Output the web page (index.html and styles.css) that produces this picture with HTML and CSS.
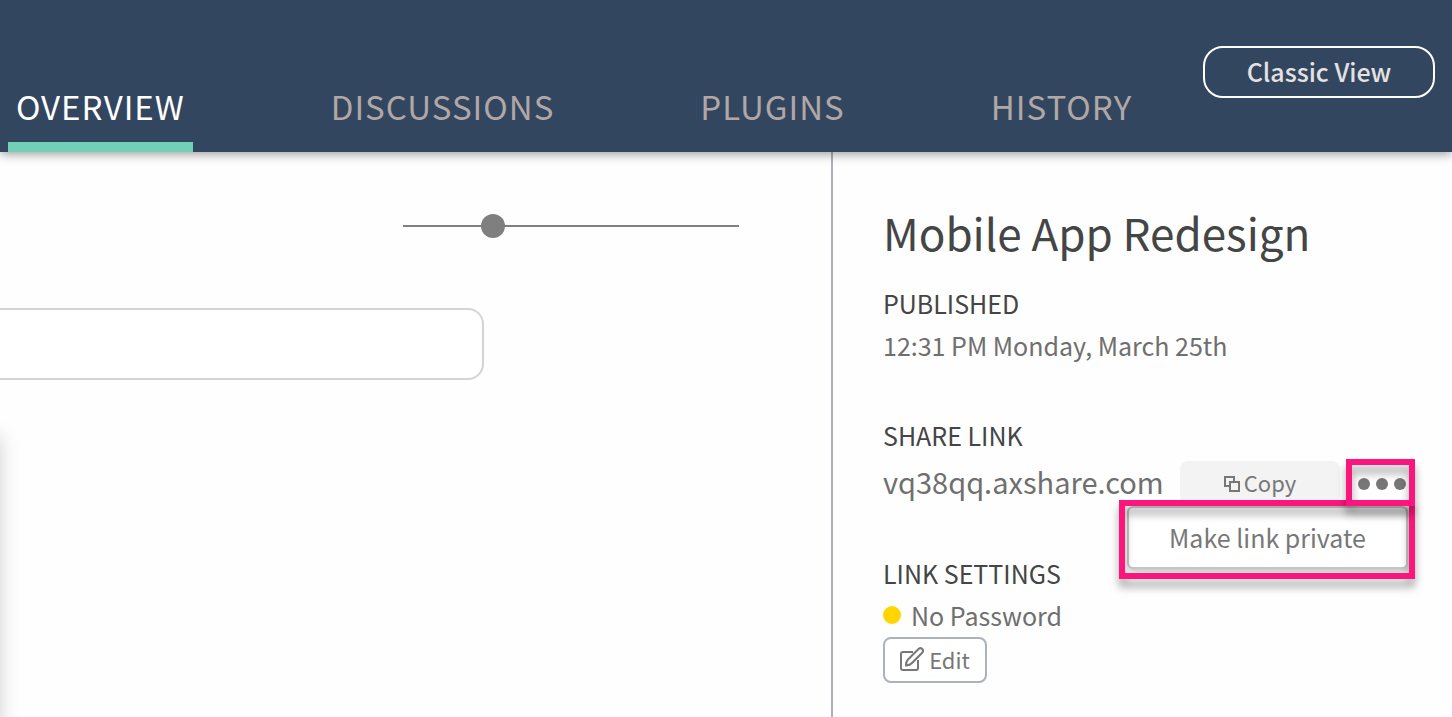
FILE: index.html
```html
<!DOCTYPE html>
<html lang="en">
<head>
<meta charset="utf-8">
<title>Mobile App Redesign</title>
<link rel="stylesheet" href="styles.css">
</head>
<body>
<header class="topbar">
  <nav class="tabs">
    <a class="tab tab-active" href="#overview">OVERVIEW</a>
    <a class="tab" href="#discussions">DISCUSSIONS</a>
    <a class="tab" href="#plugins">PLUGINS</a>
    <a class="tab" href="#history">HISTORY</a>
  </nav>
  <button class="classic" type="button">Classic View</button>
</header>
<div class="content">
  <main class="workspace">
    <input class="zoom" type="range" min="0" max="100" value="25" aria-label="Thumbnail size">
    <input class="field" type="text" aria-label="Search">
    <div class="card"></div>
  </main>
  <aside class="details">
    <h1 class="title">Mobile App Redesign</h1>
    <section class="section">
      <h2 class="label">PUBLISHED</h2>
      <p class="value">12:31 PM Monday, March 25th</p>
    </section>
    <section class="section">
      <h2 class="label">SHARE LINK</h2>
      <div class="share">
        <a class="url" href="#share">vq38qq.axshare.com</a>
        <button class="copy" type="button">
          <svg class="copy-icon" viewBox="0 0 16 16" aria-hidden="true"><path d="M5 10H1V1h9v4M6 6h9v9H6z"/></svg>
          Copy
        </button>
        <div class="more-wrap">
          <button class="more" type="button" aria-label="More options">
            <svg class="dots" viewBox="0 0 48 12" aria-hidden="true"><circle cx="6" cy="6" r="6"/><circle cx="24" cy="6" r="6"/><circle cx="42" cy="6" r="6"/></svg>
          </button>
          <button class="menu" type="button">Make link private</button>
          <span class="mark mark-menu"></span>
          <span class="mark mark-more"></span>
        </div>
      </div>
    </section>
    <section class="section">
      <h2 class="label">LINK SETTINGS</h2>
      <p class="value status"><span class="status-dot"></span>No Password</p>
      <button class="edit" type="button">
        <svg class="edit-icon" viewBox="0 0 24 24" aria-hidden="true"><path d="M13 5H3Q1 5 1 7v14q0 2 2 2h13q2 0 2-2v-8"/><path d="M6 18.500q0-4 2-6L18.500 2q2-1.700 3.700 0t0 3.700L12 16q-2 2.300-6 2.500z"/></svg>
        Edit
      </button>
    </section>
  </aside>
</div>
</body>
</html>
```
FILE: styles.css
```css
* { box-sizing: border-box; }

body {
  margin: 0;
  min-height: 100vh;
  display: flex;
  flex-direction: column;
  background: #fefefe;
  color: #6f6f6f;
  font-family: "Noto Sans CJK SC", "Open Sans", sans-serif;
  font-size: 25px;
  overflow: hidden;
}

button, input { font: inherit; color: inherit; margin: 0; }
button { display: flex; align-items: center; justify-content: center; padding: 0 0 2px; cursor: pointer; white-space: nowrap; }
svg { fill: none; flex: none; }
h1, h2, p { margin: 0; font-weight: 400; }

.topbar {
  position: relative;
  z-index: 1;
  display: flex;
  justify-content: space-between;
  height: 152px;
  padding: 0 17px 0 8px;
  background: #334660;
  box-shadow: 0 2px 10px rgba(0, 0, 0, 0.4);
}

.tabs { display: flex; align-items: flex-end; gap: 130px; }

.tab {
  padding: 0 8px 11px;
  border-bottom: 10px solid transparent;
  color: #b0a7a6;
  font-size: 33px;
  line-height: 50px;
  letter-spacing: 1px;
  text-decoration: none;
}

.tab-active { color: #fff; border-bottom-color: #72cfb8; }

.classic {
  width: 232px;
  height: 52px;
  margin-top: 46px;
  border: 2px solid #fff;
  border-radius: 20px;
  background: none;
  color: #e4e2e0;
  font-weight: 500;
}

.content { flex: 1; display: grid; grid-template-columns: minmax(0, 1fr) 621px; }

.workspace { display: flex; flex-direction: column; overflow: hidden; }

.zoom {
  appearance: none;
  align-self: flex-end;
  width: 336px;
  height: 24px;
  margin: 62px 92px 0 0;
  background: linear-gradient(#7f7f7f, #7f7f7f) center / 100% 2px no-repeat;
}

.zoom::-webkit-slider-thumb {
  appearance: none;
  width: 24px;
  height: 24px;
  border-radius: 50%;
  background: #7f7f7f;
}

.field {
  width: 484px;
  height: 72px;
  margin-top: 70px;
  padding: 0 24px;
  border: 2px solid #d4d4d4;
  border-left: 0;
  border-radius: 0 16px 16px 0;
  background: #fff;
}

.card {
  flex: 1;
  width: 40px;
  margin: 54px 0 -20px -40px;
  box-shadow: 0 2px 20px rgba(0, 0, 0, 0.18);
}

.details { padding: 48px 37px 34px 50px; border-left: 2px solid #abb2bd; }

.title { color: #444545; font-size: 44px; line-height: 64px; margin-bottom: 18px; white-space: nowrap; }

.section + .section { margin-top: 48px; }

.label { color: #444545; font-size: 25px; line-height: 42px; }
.value { line-height: 42px; }

.share { display: flex; gap: 6px; height: 43px; margin-top: 5px; }
.url { flex: 1; color: #6f6f6f; font-size: 29px; line-height: 40px; text-decoration: none; }

.copy { width: 160px; gap: 4px; border: 0; border-radius: 8px; background: #f3f3f3; color: #777; font-size: 22px; }
.copy-icon { width: 16px; height: 16px; margin-top: 4px; stroke: #777; stroke-width: 2; }

.more-wrap { position: relative; width: 69px; }
.more { width: 100%; height: 44px; padding: 2px 0 0 3px; border: 0; background: none; }
.dots { width: 48px; height: 12px; fill: #777; }

.menu {
  position: absolute;
  top: 45px;
  right: 7px;
  width: 281px;
  height: 63px;
  border: 2px solid #c4c4c4;
  border-radius: 6px;
  background: #fff;
  box-shadow: 2px 4px 4px rgba(0, 0, 0, 0.2);
  color: #777;
}

.mark {
  position: absolute;
  right: 0;
  border: 6px solid #fc157c;
  filter: drop-shadow(0 8px 4px rgba(0, 0, 0, 0.35));
  pointer-events: none;
}
.mark-more { top: -2px; width: 69px; height: 47px; }
.mark-menu { top: 39px; width: 296px; height: 79px; }

.status { display: flex; align-items: center; gap: 10px; }
.status-dot { width: 18px; height: 18px; border-radius: 50%; background: #ffd600; }

.edit { width: 104px; height: 46px; margin-top: 1px; gap: 5px; border: 2px solid #abb2bd; border-radius: 8px; background: #fff; color: #777; font-size: 22px; }
.edit-icon { width: 24px; height: 24px; stroke: #777; stroke-width: 2; }
```
